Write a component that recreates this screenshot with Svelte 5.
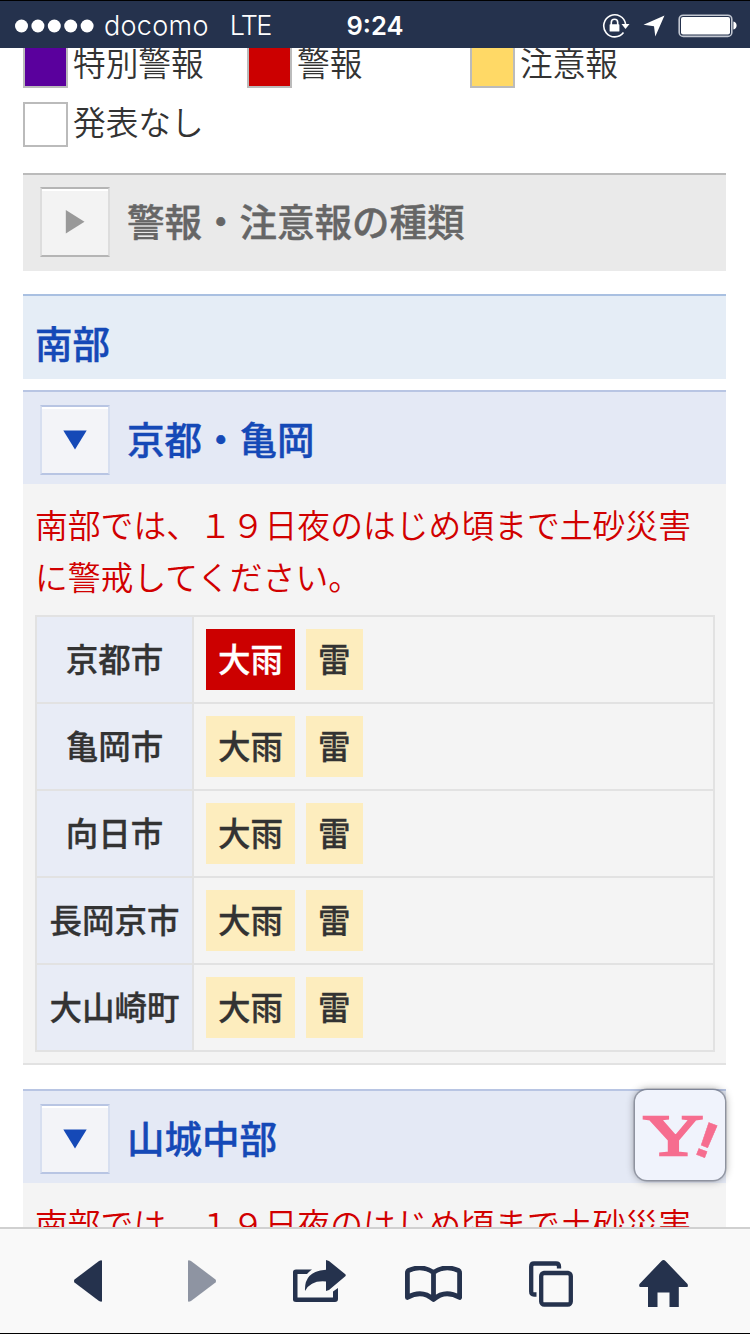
<script lang="ts">
  type Tag = { name: string; level: 'warning' | 'advisory' };

  const legend = [
    { label: '特別警報', kind: 'special' },
    { label: '警報', kind: 'warning' },
    { label: '注意報', kind: 'advisory' },
    { label: '発表なし', kind: 'none' }
  ];

  const message = '南部では、１９日夜のはじめ頃まで土砂災害に警戒してください。';

  const advisories: Tag[] = [
    { name: '大雨', level: 'advisory' },
    { name: '雷', level: 'advisory' }
  ];

  const cities: { name: string; tags: Tag[] }[] = [
    { name: '京都市', tags: [{ name: '大雨', level: 'warning' }, { name: '雷', level: 'advisory' }] },
    { name: '亀岡市', tags: advisories },
    { name: '向日市', tags: advisories },
    { name: '長岡京市', tags: advisories },
    { name: '大山崎町', tags: advisories }
  ];
</script>

<div class="screen">
  <header class="status">
    <div class="carrier">
      <svg class="signal" width="80" height="14" viewBox="0 0 80 14">
        {#each [7.5, 23.9, 40.3, 56.7, 73.1] as cx}
          <circle {cx} cy="7" r="6.5" />
        {/each}
      </svg>
      <span class="docomo">docomo</span>
      <span class="network">LTE</span>
    </div>
    <div class="clock">9:24</div>
    <div class="indicators">
      <svg width="28" height="26" viewBox="0 0 28 26">
        <path d="M21.5 19.5A11 11 0 1 1 23.6 11" fill="none" stroke="#fff" stroke-width="1.6" />
        <path d="M19.5 11h8l-4 5z" fill="#fff" />
        <path d="M9.3 12V9.5a3.2 3.2 0 0 1 6.4 0V12" fill="none" stroke="#fff" stroke-width="1.6" />
        <rect x="7.6" y="11.3" width="9.8" height="7.2" rx="0.6" fill="#fff" />
      </svg>
      <svg width="22" height="22" viewBox="0 0 22 22">
        <path d="M21.5 0.5L12.3 21.5L11 11.3L0.5 9.8z" fill="#fff" />
      </svg>
      <svg width="60" height="24" viewBox="0 0 60 24">
        <rect x="1.2" y="1.2" width="52.6" height="21.2" rx="4" fill="none" stroke="#c3c8d2" stroke-width="1.6" />
        <rect x="3" y="3" width="49" height="17.6" rx="2" fill="#fff" />
        <path d="M55.4 7.6q3.2 0.8 3.2 4t-3.2 4z" fill="#fff" />
      </svg>
    </div>
  </header>

  <main class="page">
    <ul class="legend">
      {#each legend as item}
        <li><span class="swatch {item.kind}"></span>{item.label}</li>
      {/each}
    </ul>

    <section class="head kinds">
      <span class="toggle">
        <svg width="20" height="24" viewBox="0 0 20 24"><path d="M0.8 0L19.5 11.8L0.8 23.5z" /></svg>
      </span>
      <h2>警報・注意報の種類</h2>
    </section>

    <h2 class="region">南部</h2>

    <section class="area">
      <div class="head">
        <span class="toggle">
          <svg width="24" height="20" viewBox="0 0 24 20"><path d="M0.3 0.5H23.7L12 19.5z" /></svg>
        </span>
        <h2>京都・亀岡</h2>
      </div>
      <p class="message">{message}</p>
      <table>
        <tbody>
          {#each cities as city}
            <tr>
              <th>{city.name}</th>
              <td>
                <div class="tags">
                  {#each city.tags as tag}
                    <span class="tag {tag.level}">{tag.name}</span>
                  {/each}
                </div>
              </td>
            </tr>
          {/each}
        </tbody>
      </table>
    </section>

    <section class="area">
      <div class="head">
        <span class="toggle">
          <svg width="24" height="20" viewBox="0 0 24 20"><path d="M0.3 0.5H23.7L12 19.5z" /></svg>
        </span>
        <h2>山城中部</h2>
      </div>
      <p class="message">{message}</p>
    </section>
  </main>

  <div class="yahoo">
    <svg width="90" height="90" viewBox="0 0 90 90">
      <text class="logo-y" transform="translate(8.5 65) scale(1.45 1)">Y</text>
      <text class="logo-mark" transform="translate(56 62.5) rotate(21) scale(1.25 1)">!</text>
    </svg>
  </div>

  <nav class="toolbar">
    <svg width="28" height="42" viewBox="0 0 28 42">
      <path d="M0.5 19.5L25 1Q28 -0.5 28 1V41Q28 42.5 25 41L0.5 22.5Q-0.5 21 0.5 19.5z" />
    </svg>
    <svg class="disabled" width="28" height="42" viewBox="0 0 28 42">
      <path d="M27.5 19.5L3 1Q0 -0.5 0 1V41Q0 42.5 3 41L27.5 22.5Q28.5 21 27.5 19.5z" />
    </svg>
    <svg width="54" height="42" viewBox="0 0 54 42">
      <path d="M19 9.5H3Q0 9.5 0 12V39.5Q0 42 3 42H42Q45 42 45 39V28L40 31.5V37.5H4.5V14H14Q16 11.5 19 9.5z" />
      <path d="M33 0L36 1L52 14Q53.500 15 52 16.500L36 30L33 31V21.5Q18 20 12 31Q11 11 33 9.800z" />
    </svg>
    <svg class="book" width="58" height="37" viewBox="0 0 58 37">
      <path
        d="M28.5 6.5Q17 -1.5 3.5 4.5Q2.4 5 2.4 7V31.5Q17 23 28.5 33.5Q40 23 54.6 31.5V7Q54.6 5 53.5 4.5Q40 -1.5 28.5 6.5V33"
        fill="none"
        stroke="#25324d"
        stroke-width="4.8"
        stroke-linejoin="round"
      />
    </svg>
    <svg class="pages" width="45" height="46" viewBox="0 0 45 46">
      <path d="M30 7.5V5.5Q30 2.5 27 2.5H5Q2.2 2.5 2.2 5.5V30.5Q2.2 33.5 5 33.5H7.5" />
      <rect x="12.2" y="12" width="29.6" height="31.5" rx="3" />
    </svg>
    <svg width="50" height="48" viewBox="0 0 50 48">
      <path d="M22.5 1Q24.5 -1 26.5 1L48.5 24Q49.5 27 48 27H39.800V47H30.500V32.500H18.500V47H9V27H1.500Q-0.500 27 0.500 24z" />
    </svg>
  </nav>
</div>

<style>
  :global(body) {
    margin: 0;
    background: #fff;
  }

  .screen {
    position: relative;
    display: flex;
    flex-direction: column;
    width: 750px;
    height: 1334px;
    overflow: hidden;
    font-family: 'Noto Sans CJK JP', sans-serif;
    color: #333;
  }

  .status {
    display: grid;
    grid-template-columns: 1fr auto 1fr;
    align-items: center;
    flex: none;
    height: 48px;
    padding: 2px 12px 0 14px;
    box-sizing: border-box;
    border-top: 1px solid #000;
    background: #25324d;
    color: #fff;
    font: 27px/1 Inter, sans-serif;
  }

  .carrier {
    display: flex;
    align-items: center;
  }

  .signal {
    fill: #fff;
  }

  .docomo {
    margin-left: 10px;
    font-weight: 350;
    letter-spacing: 0.3px;
  }

  .network {
    margin-left: 21px;
    font-weight: 300;
    letter-spacing: -1.6px;
  }

  .clock {
    margin-right: 2px;
    font-size: 25.5px;
    font-weight: 600;
  }

  .indicators {
    display: flex;
    justify-content: flex-end;
    align-items: center;
    gap: 13px;
  }

  .page {
    flex: 1;
    min-height: 0;
    padding: 0 24px 0 23px;
    overflow: hidden;
  }

  .legend {
    display: grid;
    grid-template-columns: 224px 223px 1fr;
    row-gap: 14px;
    margin: -5px 0 0;
    padding: 0;
    list-style: none;
    font-size: 32.7px;
    font-weight: 350;
  }

  .legend li {
    display: flex;
    height: 45px;
    line-height: 38px;
  }

  .swatch {
    width: 45px;
    height: 45px;
    margin-right: 5px;
    box-sizing: border-box;
    border: 2px solid #bbb;
  }

  .swatch.special {
    background: #5a009d;
  }

  .swatch.warning {
    background: #c00;
  }

  .swatch.advisory {
    background: #ffd966;
  }

  h2 {
    margin: 0;
    font-size: 37.5px;
    font-weight: 500;
    line-height: 50px;
    -webkit-text-stroke: 0.4px;
  }

  .head {
    display: flex;
    align-items: center;
    height: 94px;
    padding: 3px 17px 0;
    box-sizing: border-box;
    border-top: 2px solid #b8c5e3;
    background: #e4e9f5;
    color: #1549b7;
  }

  .head h2 {
    padding-bottom: 4px;
  }

  .toggle {
    display: flex;
    align-items: center;
    justify-content: center;
    width: 70px;
    height: 70px;
    margin-right: 17px;
    box-sizing: border-box;
    border: 2px solid #b8c5e3;
    border-left-color: #d7dff0;
    border-right-color: #d7dff0;
    box-shadow: inset 0 2px #fff;
    background: #f3f4f8;
    fill: #1549b7;
  }

  .kinds {
    height: 98px;
    margin-top: 26px;
    padding: 0 17px 2px;
    border-top-color: #bbb;
    background: #eaeaea;
    color: #666;
  }

  .kinds .toggle {
    border-color: #b5b5b5 #ddd;
    background: #f3f3f3;
    fill: #999;
  }

  .region {
    height: 85px;
    margin: 23px 0 11px;
    padding: 21px 12px 0;
    box-sizing: border-box;
    border-top: 2px solid #a9c0e1;
    background: #e5edf6;
    color: #1549b7;
  }

  .area {
    margin-bottom: 24px;
    padding-bottom: 11px;
    border-bottom: 2px solid #e2e2e2;
    background: #f4f4f4;
  }

  .message {
    margin: 0;
    padding: 14px 11px 14px 12px;
    color: #d10000;
    font-size: 32.8px;
    font-weight: 350;
    line-height: 51.5px;
    word-break: break-all;
  }

  table {
    width: 680px;
    margin-left: 12px;
    border-collapse: collapse;
    font-size: 32.5px;
    font-weight: 500;
    -webkit-text-stroke: 0.3px;
  }

  th,
  td {
    padding: 12px;
    border: 2px solid #e2e2e2;
  }

  th {
    width: 133px;
    padding: 8px 11px 12px;
    background: #e8ecf6;
    font-weight: 500;
    line-height: 50px;
    white-space: nowrap;
  }

  .tags {
    display: flex;
    gap: 11px;
  }

  .tag {
    height: 61px;
    padding: 0 12px;
    background: #fdedbe;
    line-height: 57px;
  }

  .tag.warning {
    background: #c00;
    color: #fff;
  }

  .yahoo {
    position: absolute;
    right: 25px;
    bottom: 154px;
    width: 90px;
    height: 90px;
    border-radius: 12px;
    background: #f0f3fc;
    box-shadow: 0 0 0 1.5px rgba(110, 115, 130, 0.55), 0 0 8px rgba(0, 0, 0, 0.45);
  }

  .logo-y,
  .logo-mark {
    fill: #f66d8f;
    stroke: #f66d8f;
  }

  .logo-y {
    font: 57px 'Liberation Serif', serif;
    stroke-width: 2.4;
  }

  .logo-mark {
    font: bold 50px 'Liberation Sans', sans-serif;
    stroke-width: 0.4;
  }

  .toolbar {
    display: grid;
    grid-template-columns: 114px 105px 112px 124px 110px 50px;
    align-items: start;
    flex: none;
    height: 107px;
    padding: 31px 0 0 74px;
    box-sizing: border-box;
    border-top: 2px solid #d0d0d0;
    border-bottom: 1px solid #000;
    background: #f9f9f9;
    fill: #25324d;
  }

  .disabled {
    opacity: 0.5;
  }

  .book {
    margin-top: 6px;
  }

  .pages {
    margin-top: 1px;
    fill: none;
    stroke: #25324d;
    stroke-width: 4.3;
  }
</style>
